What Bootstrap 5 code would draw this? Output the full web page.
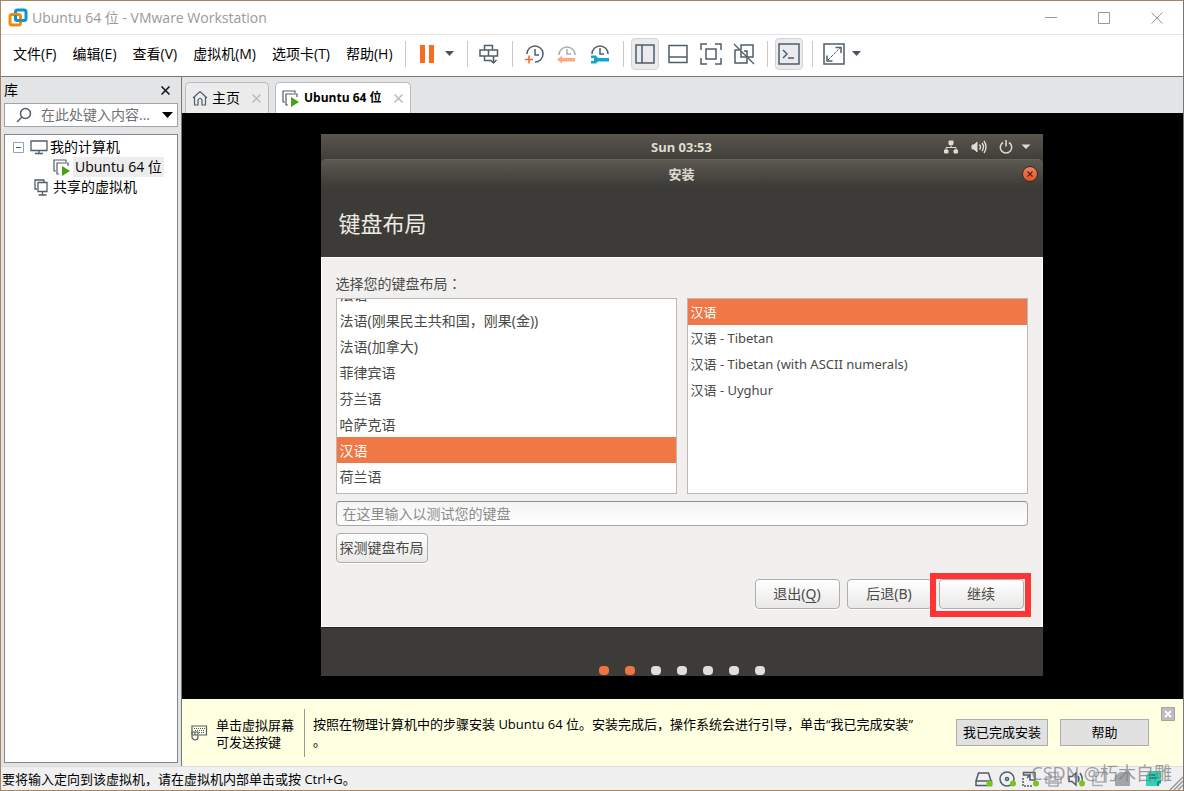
<!DOCTYPE html>
<html lang="zh-CN">
<head>
<meta charset="utf-8">
<meta name="viewport" content="width=device-width, initial-scale=1">
<title>Ubuntu 64 位 - VMware Workstation</title>
<link href="https://cdn.jsdelivr.net/npm/bootstrap@5.3.0/dist/css/bootstrap.min.css" rel="stylesheet">
<style>
  :root { --ink: #505e6a; --chrome: #e3e4e6; --ui: "Open Sans", "Noto Sans CJK SC", sans-serif; --guest: "Noto Sans", "Noto Sans CJK SC", sans-serif; }
  body { font-family: var(--ui); font-size: 14px; line-height: 20px; color: #000; background: #f0f0f0; }
  svg { display: block; fill: none; stroke: var(--ink); stroke-width: 1.5; flex: none; }
  button { font: inherit; color: inherit; }
  .app-window { min-height: 100vh; border: 1px solid #a58562; border-right-color: #777; }
  .title-bar { height: 34px; background: #fff; border-bottom: 1px solid #e3e3e3; color: #999; padding-left: 7px; }
  .win-btn { width: 53px; height: 32px; border: 0; background: none; padding: 0; }
  .win-btn svg { stroke: #999; stroke-width: 1; margin: auto; }
  .menu-bar { min-height: 42px; background: #fff; border-bottom: 1px solid #777; padding: 0 0 3px 4px; }
  .menu-bar .nav-link { color: #000; padding: 0 8px; }
  .tool-group { border-left: 1px solid #c9c9c9; height: 26px; padding: 0 6px 0 5px; }
  .tool-btn { width: 33px; height: 32px; border: 0; padding: 0; background: none; }
  .tool-btn svg { margin: auto; }
  .tool-on { background: #ebebed; border: 1px solid #d4d4d6; border-radius: 4px; width: 28px; margin: 0 3px 0 2px; }
  .caret-btn { width: 17px; height: 28px; border: 0; background: none; padding: 0; }
  .side-pane { width: 181px; background: var(--chrome); border-right: 1px solid #777; padding: 0 3px 3px; }
  .side-head { height: 26px; }
  .search-box { height: 24px; background: #fff; border: 1px solid #a0a3a8; margin-bottom: 7px; }
  .search-box input { border: 0; outline: 0; background: none; padding: 0; min-width: 0; }
  .search-box input::placeholder { color: #707070; opacity: 1; }
  .tree-box { background: #fff; border: 1px solid #828790; padding: 2px 0 0 8px; }
  .tree-row { height: 20px; gap: 2px; }
  .tree-pick { background: #ededed; padding: 0 2px; }
  .bare { border: 0; background: none; padding: 0; }
  .tab-strip { height: 36px; background: var(--chrome); padding: 5px 3px 0; gap: 6px; }
  .vm-tab { height: 31px; border: 1px solid #b9babd; border-bottom: 0; border-radius: 5px 5px 0 0; background: #ececed; padding: 0 7px 0 6px; }
  .vm-tab.current { background: #fff; font-size: 12px; font-weight: 700; color: #000; }
  .tab-name { margin: 0 12px 0 4px; flex: none; }
  .guest-area { background: #000; min-height: 560px; padding: 0 10px 2px 8px; }
  .guest { width: 100%; max-width: 722px; background: #3d3b37; color: #4a4a47; font-family: var(--guest); }
  .guest-top { height: 25px; background: linear-gradient(#59564d, #403e39); color: #dfdbd2; font-size: 13px; padding: 0 12px; display: grid; grid-template-columns: 1fr auto 1fr; align-items: center; }
  .guest-top svg { fill: #dfdbd2; stroke: #dfdbd2; }
  .guest-title { height: 28px; background: linear-gradient(#5b5950, #3d3b37); border-top: 1px solid #66635a; border-radius: 5px 5px 0 0; color: #dfdbd2; font-size: 13px; padding: 0 5px; display: grid; grid-template-columns: 1fr auto 1fr; align-items: center; }
  .close-dot { width: 16px; height: 16px; border-radius: 50%; border: 1px solid #2f2a26; background: linear-gradient(#f38263, #e2531f); padding: 0; }
  .guest h1 { font-size: 22px; line-height: 28px; color: #eeebe4; margin: 0; padding: 22px 18px 20px; font-weight: 400; }
  .guest-body { background: #f1f0ef; border: 1px solid #fff; padding: 15px 14px 17px; }
  .mid-colon { font-family: "Noto Sans CJK TC", sans-serif; }
  .list-pair { gap: 10px; margin-bottom: 7px; }
  .pick-list { height: 196px; background: #fff; border: 1px solid #bcb8b3; overflow: hidden; flex: 1 1 0; min-width: 0; }
  .pick-list.scrolled { padding-bottom: 4px; justify-content: end; }
  .pick-list .pick { height: 26px; flex: none; padding: 0 3px; line-height: 27px; white-space: nowrap; border: 0; background: none; color: inherit; text-align: left; }
  .pick-list .chosen { background: #f07746; color: #fff; }
  .latin-list { font-size: 13px; }
  .test-input { height: 25px; border: 1px solid #aaa8a4; border-top-color: #8e8d8a; border-radius: 4px; background: linear-gradient(#f4f4f4, #fff); padding: 0 6px; margin-bottom: 7px; }
  .test-input::placeholder { color: #8b8b89; opacity: 1; }
  .gtk-btn { height: 30px; min-width: 85px; border: 1px solid #b0aeaa; border-radius: 4px; background: linear-gradient(#fff, #e9e8e7); padding: 0 3px; color: #4a4a47; box-shadow: 0 1px 0 #fff; }
  .gtk-btn u { text-underline-offset: 3px; }
  .action-row { gap: 7px; }
  .marker { position: absolute; inset: -6px -7px -8px -9px; border: 6px solid #ff3434; pointer-events: none; }
  .step-bar { height: 49px; border-top: 1px solid #22211f; gap: 16px; padding-bottom: 1px; }
  .step { width: 10px; height: 9px; border-radius: 4px; background: #dedede; }
  .step.done { background: #ee7442; }
  .notice { background: #ffffe1; min-height: 67px; padding: 0 8px; font-size: 13px; line-height: 17px; }
  .hint-text { width: 89px; border-right: 1px solid #999; padding: 8px 0; height: 48px; }
  .win32 { height: 27px; background: #e1e1e1; border: 1px solid #adadad; padding: 0 6px; min-width: 89px; margin-right: 12px; flex: none; }
  .status-bar { min-height: 24px; background: #f0f0f0; border-top: 1px solid #dcdcdc; gap: 6px; padding-left: 1px; font-size: 13px; }
  .watermark { position: absolute; right: 11px; bottom: 5px; font-size: 18px; line-height: 24px; color: #808080c0; white-space: nowrap; pointer-events: none; }
  .fade-icon { opacity: .45; }
</style>
</head>
<body>
<div class="app-window d-flex flex-column">
  <header class="title-bar d-flex align-items-center flex-shrink-0">
    <svg width="20" height="20" viewBox="0 0 20 20"><rect x="7.500" y="2" width="10.500" height="10.500" rx="2" stroke="#0d92d2" stroke-width="3"/><rect x="2" y="6.500" width="10.500" height="10.500" rx="2" stroke="#f38b00" stroke-width="3"/><path d="M7.500 7v3.500a2 2 0 0 0 2 2h5" stroke="#0d92d2" stroke-width="2.500"/></svg>
    <span class="ms-1">Ubuntu 64 位 - VMware Workstation</span>
    <div class="ms-auto d-flex">
      <button class="win-btn" aria-label="最小化"><svg width="12" height="12"><path d="M0 5.500h12"/></svg></button>
      <button class="win-btn" aria-label="最大化"><svg width="12" height="12"><path d="M.5.5h11v11H.5z"/></svg></button>
      <button class="win-btn" aria-label="关闭"><svg width="12" height="12"><path d="M.5.5l11 11M11.500.5l-11 11"/></svg></button>
    </div>
  </header>

  <div class="menu-bar d-flex align-items-center flex-shrink-0">
    <nav class="nav flex-nowrap me-1">
      <a class="nav-link" href="#">文件(F)</a><a class="nav-link" href="#">编辑(E)</a><a class="nav-link" href="#">查看(V)</a><a class="nav-link" href="#">虚拟机(M)</a><a class="nav-link" href="#">选项卡(T)</a><a class="nav-link" href="#">帮助(H)</a>
    </nav>
    <div class="tool-group d-flex align-items-center">
      <button class="tool-btn" aria-label="暂停"><svg width="16" height="20"><path d="M1 1h5v18H1zM10 1h5v18h-5z" fill="#f96b1e" stroke="none"/></svg></button>
      <button class="caret-btn" aria-label="电源选项"><svg width="11" height="6"><path d="M1 0h9L5.500 5z" fill="#465461" stroke="none"/></svg></button>
    </div>
    <div class="tool-group d-flex align-items-center">
      <button class="tool-btn" aria-label="发送按键"><svg width="20" height="21"><path d="M5.500 6V1.500h8V6M1 6h17.500v6H1zM9.500 6v6M5.500 12v4.500H12M14.500 12v7M11.500 16l3 3 3-3"/></svg></button>
    </div>
    <div class="tool-group d-flex align-items-center">
      <button class="tool-btn" aria-label="拍摄快照"><svg width="20" height="20"><path d="M3 10a8 8 0 1 1 8 8M11 5v6h4"/><path d="M1 15.500h8M5 11.500v8" stroke="#f2672a"/></svg></button>
      <button class="tool-btn" aria-label="恢复快照"><svg width="20" height="20"><path d="M2 11a8 8 0 0 1 16 0M10 5v5h4" stroke="#a9adb2"/><path d="M0 15.500l5-4v2.500h13v3.500H5v2z" fill="#ffa885" stroke="none"/></svg></button>
      <button class="tool-btn" aria-label="管理快照"><svg width="20" height="20"><path d="M2 10a8 8 0 0 1 16 0M10 4v6h4"/><path d="M1 11.500h5l2 2.500h11v3.500H8l-2 2H1V17h3v-3H1z" fill="#0fa8c9" stroke="none"/></svg></button>
    </div>
    <div class="tool-group d-flex align-items-center">
      <button class="tool-btn tool-on" aria-label="显示库"><svg width="20" height="20"><path d="M1 1h18v18H1zM7 1v18"/></svg></button>
      <button class="tool-btn" aria-label="显示缩略图"><svg width="20" height="20"><path d="M1 1.500h18v17H1zM1 13h18"/></svg></button>
      <button class="tool-btn" aria-label="全屏"><svg width="22" height="22"><path d="M1 7V1h6M15 1h6v6M21 15v6h-6M7 21H1v-6M6 6h10v10H6z"/></svg></button>
      <button class="tool-btn" aria-label="Unity"><svg width="22" height="22"><path d="M8 7V2h12v12h-6M2 7h4M2 6.500V20h12v-5M8 8v6h6V8h-3"/><path d="M1 1l20 20" stroke-width="1.200"/></svg></button>
    </div>
    <div class="tool-group d-flex align-items-center">
      <button class="tool-btn tool-on" aria-label="控制台视图"><svg width="22" height="22"><path d="M1 1h20v20H1zM5 7l4 4-4 4M10 15h6"/></svg></button>
    </div>
    <div class="tool-group d-flex align-items-center">
      <button class="tool-btn" aria-label="自由拉伸"><svg width="22" height="22"><path d="M1 1h20v20H1zM12.500 4.500H18V10M4 12.500V18h5.500"/><path d="M5 17L17 5" stroke-width="1" stroke-dasharray="3 1"/></svg></button>
      <button class="caret-btn" aria-label="拉伸选项"><svg width="11" height="6"><path d="M1 0h9L5.500 5z" fill="#465461" stroke="none"/></svg></button>
    </div>
  </div>

  <div class="d-flex flex-grow-1">
    <aside class="side-pane d-flex flex-column flex-shrink-0">
      <div class="side-head d-flex align-items-center justify-content-between flex-shrink-0">
        <span>库</span>
        <button class="bare me-1 pe-1" aria-label="关闭库"><svg width="9" height="9"><path d="M.5.5l8 8M8.500.5l-8 8" stroke="#111"/></svg></button>
      </div>
      <div class="search-box d-flex align-items-center flex-shrink-0">
        <svg class="ms-2 me-2" width="20" height="16"><circle cx="12.500" cy="6.500" r="5"/><path d="M9 10l-5 5"/></svg>
        <input class="flex-grow-1" type="text" placeholder="在此处键入内容..." aria-label="搜索库">
        <button class="bare me-1" aria-label="搜索选项"><svg width="11" height="6"><path d="M0 0h11L5.500 6z" fill="#000" stroke="none"/></svg></button>
      </div>
      <div class="tree-box flex-grow-1">
        <div class="tree-row d-flex align-items-center">
          <button class="bare" aria-label="折叠"><svg width="11" height="11"><path d="M.5.5h10v10H.5z" stroke="#9aa2ab" stroke-width="1"/><path d="M3 5.500h5" stroke="#3b56a5" stroke-width="1"/></svg></button>
          <svg class="ms-1" width="18" height="16"><path d="M1 2h16v9.500H1zM9 12v2.500M5 14.500h8" stroke-width="1.300"/></svg>
          <span>我的计算机</span>
        </div>
        <div class="tree-row d-flex align-items-center ps-4">
          <svg class="ms-3" width="18" height="17"><path d="M3 12H1V1h12v2M6 15H4V4h11v3" stroke-width="1.200"/><path d="M9 7l8 5-8 5z" fill="#48a016" stroke="none"/></svg>
          <span class="tree-pick">Ubuntu 64 位</span>
        </div>
        <div class="tree-row d-flex align-items-center ps-3">
          <svg class="ms-1" width="18" height="17"><path d="M4 10H2V1h9v2M5 3.500h9v9H5zM9.500 12.500V16M5.500 16h8" stroke-width="1.300"/></svg>
          <span>共享的虚拟机</span>
        </div>
      </div>
    </aside>

    <main class="d-flex flex-column flex-grow-1">
      <div class="tab-strip d-flex flex-shrink-0">
        <div class="vm-tab d-flex align-items-center">
          <svg width="16" height="16"><path d="M1 8l7-6.500L15 8M2.500 7v8H6v-4.500a2 2 0 0 1 4 0V15h3.500V7" stroke-width="1.200"/></svg>
          <span class="tab-name">主页</span>
          <button class="bare" aria-label="关闭主页"><svg width="9" height="9"><path d="M.5.5l8 8M8.500.5l-8 8" stroke="#bbb"/></svg></button>
        </div>
        <div class="vm-tab current d-flex align-items-center">
          <svg width="18" height="17"><path d="M3 12H1V1h12v2M6 15H4V4h11v3" stroke-width="1.200"/><path d="M9 7l8 5-8 5z" fill="#48a016" stroke="none"/></svg>
          <span class="tab-name">Ubuntu 64 位</span>
          <button class="bare" aria-label="关闭 Ubuntu 64 位"><svg width="9" height="9"><path d="M.5.5l8 8M8.500.5l-8 8" stroke="#bbb"/></svg></button>
        </div>
      </div>

      <div class="guest-area flex-grow-1 d-flex align-items-center justify-content-center">
        <section class="guest">
          <div class="guest-top">
            <span></span><strong>Sun 03:53</strong>
            <div class="d-flex align-items-center justify-content-end gap-2">
              <svg width="16" height="14"><path d="M6 1h4v3.500H6zM1.500 10H5v3H1.500zM11 10h3.500v3H11z" stroke-width="1"/><path d="M8 5v2.500M3 10V7.500h10V10" fill="none" stroke-width="1"/></svg>
              <svg class="ms-1" width="16" height="14"><path d="M1 5h2l3-3v10L3 9H1z" stroke-width="1"/><path d="M8.500 4.500q2 2.500 0 5M11 3q3 4 0 8M13 1q4 6 0 12" fill="none" stroke-width="1.400"/></svg>
              <svg class="ms-1" width="14" height="14"><path d="M4 2.500a5.700 5.700 0 1 0 6 0M7 0v6.500" fill="none"/></svg>
              <svg width="10" height="6"><path d="M.5.5h9L5 5z" stroke="none"/></svg>
            </div>
          </div>
          <div class="guest-title">
            <span></span><strong>安装</strong>
            <button class="close-dot ms-auto" aria-label="关闭安装"><svg class="m-auto" width="6" height="6"><path d="M.5.5l5 5M5.500.5l-5 5" stroke="#5b2010" stroke-width="1.200"/></svg></button>
          </div>
          <h1>键盘布局</h1>
          <div class="guest-body">
            <label class="d-block mb-1" for="keytest">选择您的键盘布局<span class="mid-colon" lang="zh-TW">：</span></label>
            <div class="list-pair d-flex">
              <div class="pick-list scrolled d-flex flex-column" role="listbox" aria-label="语言">
                <button class="pick" role="option">法语</button>
                <button class="pick" role="option">法语(刚果民主共和国，刚果(金))</button>
                <button class="pick" role="option">法语(加拿大)</button>
                <button class="pick" role="option">菲律宾语</button>
                <button class="pick" role="option">芬兰语</button>
                <button class="pick" role="option">哈萨克语</button>
                <button class="pick chosen" role="option" aria-selected="true">汉语</button>
                <button class="pick" role="option">荷兰语</button>
              </div>
              <div class="pick-list latin-list d-flex flex-column" role="listbox" aria-label="变体">
                <button class="pick chosen" role="option" aria-selected="true">汉语</button>
                <button class="pick" role="option">汉语 - Tibetan</button>
                <button class="pick" role="option">汉语 - Tibetan (with ASCII numerals)</button>
                <button class="pick" role="option">汉语 - Uyghur</button>
              </div>
            </div>
            <input id="keytest" class="test-input d-block w-100" type="text" placeholder="在这里输入以测试您的键盘">
            <button class="gtk-btn">探测键盘布局</button>
            <div class="action-row d-flex justify-content-end mt-3 pe-1">
              <button class="gtk-btn">退出(<u>Q</u>)</button>
              <button class="gtk-btn">后退(B)</button>
              <div class="position-relative"><button class="gtk-btn">继续</button><span class="marker"></span></div>
            </div>
          </div>
          <div class="step-bar d-flex justify-content-center align-items-end">
            <span class="step done"></span><span class="step done"></span><span class="step"></span><span class="step"></span><span class="step"></span><span class="step"></span><span class="step"></span>
          </div>
        </section>
      </div>

      <div class="notice d-flex align-items-center flex-shrink-0">
        <svg class="me-2" width="18" height="18"><path d="M2 10V2h14.500v9H9" stroke-width="1.200"/><path d="M4 4.500h11M5 6.500h10M9 8.500h6" stroke-width="1.200" stroke-dasharray="1 1"/><path d="M2 8h6v5a3 3 0 0 1-6 0zM5 8v3M2 11h6" stroke-width="1.200"/></svg>
        <div class="hint-text flex-shrink-0 me-2">单击虚拟屏幕<br>可发送按键</div>
        <div class="flex-grow-1">按照在物理计算机中的步骤安装 Ubuntu 64 位。安装完成后，操作系统会进行引导，单击“我已完成安装”<br>。</div>
        <button class="win32">我已完成安装</button>
        <button class="win32">帮助</button>
        <button class="bare align-self-start mt-2 flex-shrink-0" aria-label="关闭提示"><svg width="14" height="14"><path d="M.5.5h13v13H.5z" fill="#bcbcc0" stroke="#a5a5a9" stroke-width="1"/><path d="M4 4l6 6M10 4l-6 6" stroke="#fff" stroke-width="2"/></svg></button>
      </div>
    </main>
  </div>

  <footer class="status-bar d-flex align-items-center flex-shrink-0 position-relative">
    <span class="me-auto">要将输入定向到该虚拟机，请在虚拟机内部单击或按 Ctrl+G。</span>
    <svg width="18" height="16"><path d="M1 10l2.500-8h10L16 10M1 10h15.500v4.500H1z"/><circle cx="14.500" cy="12.500" r="3" fill="#7ac51c" stroke="none"/></svg>
    <svg width="17" height="16"><circle cx="8" cy="8" r="7"/><circle cx="8" cy="8" r="1.500"/><circle cx="14" cy="12.500" r="3" fill="#7ac51c" stroke="none"/></svg>
    <svg width="17" height="16"><path d="M8 4H1.500V1.500H13V9H8V4l-3 3"/><path d="M1 7v8h10" stroke-dasharray="2 1"/><circle cx="14" cy="12.500" r="3" fill="#7ac51c" stroke="none"/></svg>
    <svg class="fade-icon" width="17" height="16"><path d="M4 6V1.500h9V6M1 6h15v6H1zM4 10h9v5H4z"/></svg>
    <svg width="17" height="16"><path d="M1 5.500h3L8 2v12l-4-3.500H1zM10 5q2 3 0 6M12 2q4 6 1 10"/><circle cx="14" cy="12.500" r="3" fill="#7ac51c" stroke="none"/></svg>
    <svg class="fade-icon" width="17" height="16"><path d="M5 1.500h10V11H5zM2 5v9.500h10"/></svg>
    <svg class="me-2" width="17" height="16"><path d="M1 5l5-4h10v14H1z" fill="#a2a6ab" stroke="none"/></svg>
    <svg width="18" height="17"><path d="M4 1h12v12l-3 3H1V6z" fill="#2cd3b5" stroke="none"/><path d="M4 5h6M4 8h8M13 16v-4h3" stroke="#087d76"/></svg>
    <svg class="align-self-end" width="14" height="14"><path d="M1 14L14 1M5 14l9-9M9 14l5-5" stroke="#999"/></svg>
    <span class="watermark">CSDN @朽木自雕</span>
  </footer>
</div>
<script src="https://cdn.jsdelivr.net/npm/bootstrap@5.3.0/dist/js/bootstrap.bundle.min.js"></script>
</body>
</html>
